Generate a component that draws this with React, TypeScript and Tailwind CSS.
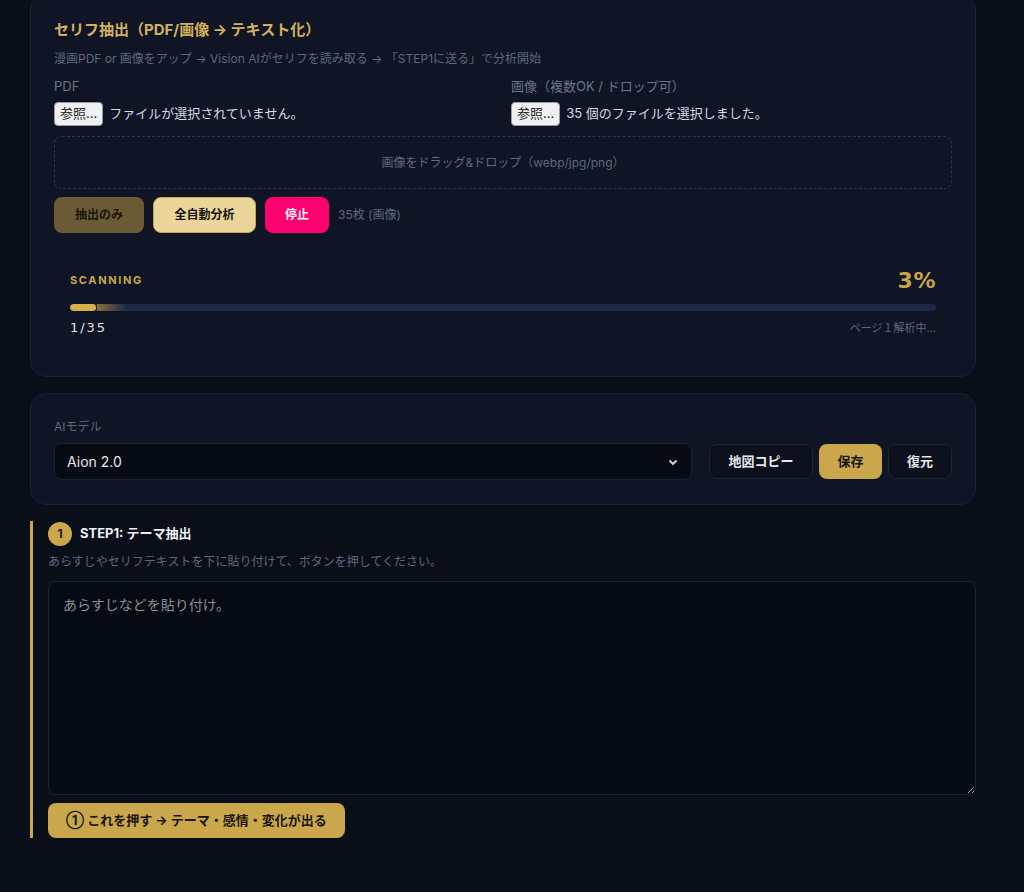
import React from "react";

const F = { fontFamily: 'Inter, "Noto Sans CJK JP", "Noto Sans", sans-serif' };

function FileRow({ label, text }: { label: string; text: string }) {
  return (
    <div>
      <div className="text-[13px] leading-[18px] text-[#6b7589]">{label}</div>
      <div className="mt-[7px] flex items-center gap-[6px] h-[24px]">
        <span className="h-[24px] px-[5px] flex items-center rounded-[4px] bg-[#eef0f3] border border-[#9a9a9a] text-[13px] text-[#222]">参照...</span>
        <span className="text-[13px] text-[#d5d9e0]">{text}</span>
      </div>
    </div>
  );
}

export default function App() {
  return (
    <div style={F} className="min-h-[892px] bg-[#0a0e19] px-[30px] pb-10 overflow-hidden">
      <div className="w-[946px] -mt-[6px] rounded-[16px] bg-[#0f1524] border border-[#1a2236] px-[23px] pt-[24px] pb-[24px]">
        <div className="text-[15px] leading-[22px] font-bold text-[#d4b05a]">セリフ抽出（PDF/画像 → テキスト化）</div>
        <div className="mt-[9px] text-[12px] leading-[18px] text-[#5d687c]">漫画PDF or 画像をアップ → Vision AIがセリフを読み取る → 「STEP1に送る」で分析開始</div>
        <div className="mt-[9px] grid grid-cols-2 gap-4">
          <FileRow label="PDF" text="ファイルが選択されていません。" />
          <FileRow label="画像（複数OK / ドロップ可）" text="35 個のファイルを選択しました。" />
        </div>
        <div className="mt-[10px] h-[53px] rounded-[8px] border border-dashed border-[#2a3550] flex items-center justify-center text-[12px] text-[#5d687c]">
          画像をドラッグ&ドロップ（webp/jpg/png）
        </div>
        <div className="mt-[8px] flex items-center gap-[9px]">
          <button className="h-[36px] w-[90px] rounded-[8px] bg-[#6b5b35] text-[12px] font-bold text-[#1a1507]">抽出のみ</button>
          <button className="h-[36px] w-[103px] rounded-[8px] bg-[#ead69b] border border-[#c9a74a] text-[12px] font-bold text-[#15120a]">全自動分析</button>
          <button className="h-[36px] w-[64px] rounded-[8px] bg-[#ff006e] text-[12px] font-bold text-white">停止</button>
          <span className="text-[12px] text-[#5d687c]">35枚 (画像)</span>
        </div>
        <div className="mt-[17px] px-4 pt-4 pb-4">
          <div className="flex items-center justify-between h-[28px]">
            <span className="text-[11px] font-bold tracking-[0.15em] text-[#c9a54a]">SCANNING</span>
            <span className="text-[22px] font-black tracking-wide text-[#c9a54a]" style={{ fontFamily: '"DejaVu Sans", sans-serif' }}>3%</span>
          </div>
          <div className="mt-[10px] h-[7px] rounded-full bg-[#1e2944] relative overflow-hidden">
            <div className="absolute left-0 top-0 h-full w-[26px] rounded-full bg-[#d4b04f]" />
            <div className="absolute left-[27px] top-0 h-full w-[29px] bg-gradient-to-r from-[#8a7134] to-[#1e2944]" />
          </div>
          <div className="mt-[9px] flex items-center justify-between h-[16px]">
            <span className="text-[13px] font-normal tracking-[0.15em] text-[#dfe3ea]" style={{ fontFamily: '"DejaVu Sans", sans-serif' }}>1/35</span>
            <span className="text-[11px] text-[#5d687c]">ページ１解析中...</span>
          </div>
        </div>
      </div>

      <div className="w-[946px] mt-[16px] rounded-[16px] bg-[#0f1524] border border-[#1a2236] px-[23px] py-[24px]">
        <div className="flex items-end gap-[17px]">
          <div className="flex-1">
            <div className="text-[12px] leading-[18px] text-[#5d687c]">AIモデル</div>
            <div className="mt-[7px] h-[37px] rounded-[8px] bg-[#060a13] border border-[#1a2236] flex items-center justify-between px-[12px]">
              <span className="text-[14px] text-[#e6e8ec]">Aion 2.0</span>
              <svg width="12" height="12" viewBox="0 0 12 12" fill="none" stroke="#d8dbe0" strokeWidth="1.8"><path d="M2.5 4.5 6 8l3.5-3.5" /></svg>
            </div>
          </div>
          <div className="flex gap-[6px] mb-[1px]">
            <button className="h-[35px] w-[104px] rounded-[8px] bg-[#0b101c] border border-[#1c2436] text-[13px] font-bold text-[#e6e8ec]">地図コピー</button>
            <button className="h-[35px] w-[63px] rounded-[8px] bg-[#c9a74a] text-[13px] font-bold text-[#1a1507]">保存</button>
            <button className="h-[35px] w-[64px] rounded-[8px] bg-[#0b101c] border border-[#1c2436] text-[13px] font-bold text-[#e6e8ec]">復元</button>
          </div>
        </div>
      </div>

      <div className="w-[946px] mt-[16px] border-l-[3px] border-[#c9a74a] pl-[15px]">
        <div className="flex items-center gap-[8px] h-[25px]">
          <span className="w-[24px] h-[24px] rounded-full bg-[#c9a74a] flex items-center justify-center text-[12px] font-bold text-[#1a1507]">1</span>
          <span className="text-[13px] font-bold text-[#eef0f4]">STEP1: テーマ抽出</span>
        </div>
        <div className="mt-[7px] text-[12px] leading-[18px] text-[#5d687c]">あらすじやセリフテキストを下に貼り付けて、ボタンを押してください。</div>
        <textarea
          className="mt-[10px] block w-full h-[214px] rounded-[8px] bg-[#060a13] border border-[#1a2236] px-[14px] py-[12px] text-[14px] text-[#e6e8ec] placeholder:text-[#8a8f99] outline-none"
          placeholder="あらすじなどを貼り付け。"
        />
        <button className="mt-[8px] h-[35px] px-[18px] rounded-[8px] bg-[#c9a74a] text-[13px] font-bold text-[#1a1507]">① これを押す → テーマ・感情・変化が出る</button>
      </div>
    </div>
  );
}
